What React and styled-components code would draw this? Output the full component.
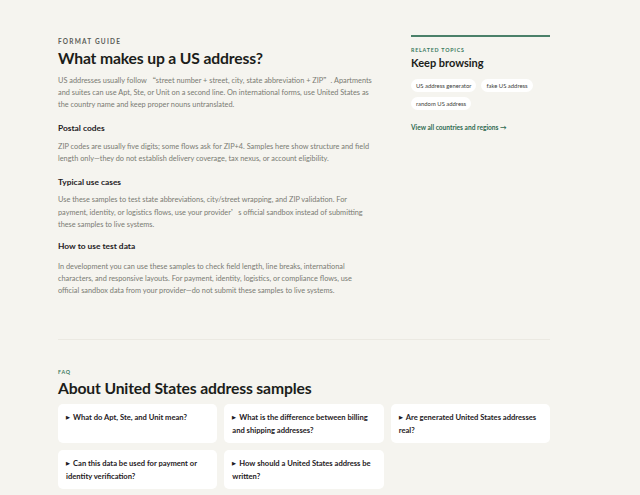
import React from 'react';
import styled, { createGlobalStyle } from 'styled-components';

const GlobalStyle = createGlobalStyle`
  html, body {
    margin: 0;
    padding: 0;
    background: #f5f4ef;
  }
  body {
    font-family: Lato, "Noto Sans", sans-serif;
    color: #1d1f1c;
  }
`;

const Page = styled.div`
  width: 492px;
  padding: 35px 0 0 58px;
`;

const Top = styled.div`
  display: grid;
  grid-template-columns: 316px 139px;
  column-gap: 37px;
  align-items: start;
`;

const Guide = styled.div`
  padding-top: 1px;
`;

const Eyebrow = styled.div`
  font-size: ${(p) => (p.small ? '5.3px' : '6.5px')};
  font-weight: 700;
  letter-spacing: ${(p) => (p.small ? '0.8px' : '1.2px')};
  text-transform: uppercase;
  color: ${(p) => (p.green ? '#3a7a5e' : '#5b5d58')};
  line-height: ${(p) => (p.small ? '8px' : '12px')};
`;

const Title = styled.h2`
  margin: ${(p) => p.$mt || '0'} 0 0;
  font-size: 15.7px;
  font-weight: 700;
  line-height: 20px;
  letter-spacing: -0.15px;
  color: #1b1d1a;
`;

const Body = styled.p`
  margin: ${(p) => p.$mt || '6px'} 0 0;
  font-size: 7.35px;
  line-height: 12px;
  color: #7a7b73;
`;

const Wide = styled.span`
  font-family: "Noto Sans CJK SC", sans-serif;
`;

const SubHead = styled.h3`
  margin: ${(p) => p.$mt || '11px'} 0 0;
  font-size: 8.4px;
  font-weight: 700;
  line-height: 12px;
  color: #1e201d;
`;

const Aside = styled.aside`
  border-top: 2px solid #4a8069;
  padding-top: 9px;
`;

const AsideTitle = styled.h3`
  margin: 2px 0 0;
  font-size: 11px;
  font-weight: 700;
  line-height: 14px;
  color: #1b1d1a;
`;

const Chips = styled.div`
  display: flex;
  flex-wrap: wrap;
  gap: 5px;
  margin-top: 9px;
`;

const Chip = styled.span`
  display: inline-flex;
  align-items: center;
  height: 13px;
  padding: 0 5px;
  background: #ffffff;
  border-radius: 7px;
  font-size: 5.9px;
  color: #3b3d39;
`;

const ViewAll = styled.a`
  display: block;
  margin-top: 12px;
  font-size: 6.6px;
  font-weight: 700;
  line-height: 10px;
  color: #2f6a51;
  text-decoration: none;
`;

const Divider = styled.hr`
  margin: 42px 0 0;
  border: 0;
  border-top: 1px solid #ebe9e2;
`;

const Faq = styled.section`
  padding-top: 28px;
`;

const FaqGrid = styled.div`
  display: grid;
  grid-template-columns: repeat(3, 1fr);
  gap: 7px;
  margin-top: 6px;
`;

const Card = styled.div`
  background: #ffffff;
  border-radius: 5px;
  height: 39px;
  box-sizing: border-box;
  padding: 7px 8px;
  font-size: 7.6px;
  font-weight: 700;
  line-height: 12px;
  color: #1e201d;
`;

const Marker = styled.span`
  font-size: 4.5px;
  margin-right: 3px;
  vertical-align: 1px;
`;

const faqs = [
  'What do Apt, Ste, and Unit mean?',
  'What is the difference between billing and shipping addresses?',
  'Are generated United States addresses real?',
  'Can this data be used for payment or identity verification?',
  'How should a United States address be written?',
];

const topics = ['US address generator', 'fake US address', 'random US address'];

export default function App() {
  return (
    <>
      <GlobalStyle />
      <Page>
        <Top>
          <Guide>
            <Eyebrow>Format guide</Eyebrow>
            <Title>What makes up a US address?</Title>
            <Body>
              US addresses usually follow <Wide>“</Wide>street number + street, city, state abbreviation + ZIP<Wide>”</Wide>. Apartments
              and suites can use Apt, Ste, or Unit on a second line. On international forms, use United States as
              the country name and keep proper nouns untranslated.
            </Body>
            <SubHead>Postal codes</SubHead>
            <Body $mt="7px">
              ZIP codes are usually five digits; some flows ask for ZIP+4. Samples here show structure and field
              length only—they do not establish delivery coverage, tax nexus, or account eligibility.
            </Body>
            <SubHead>Typical use cases</SubHead>
            <Body $mt="6px">
              Use these samples to test state abbreviations, city/street wrapping, and ZIP validation. For
              payment, identity, or logistics flows, use your provider<Wide>’</Wide>s official sandbox instead of submitting
              these samples to live systems.
            </Body>
            <SubHead $mt="9px">How to use test data</SubHead>
            <Body $mt="9px">
              In development you can use these samples to check field length, line breaks, international
              characters, and responsive layouts. For payment, identity, logistics, or compliance flows, use
              official sandbox data from your provider—do not submit these samples to live systems.
            </Body>
          </Guide>
          <Aside>
            <Eyebrow small green>Related topics</Eyebrow>
            <AsideTitle>Keep browsing</AsideTitle>
            <Chips>
              {topics.map((t) => (
                <Chip key={t}>{t}</Chip>
              ))}
            </Chips>
            <ViewAll href="#">View all countries and regions →</ViewAll>
          </Aside>
        </Top>
        <Divider />
        <Faq>
          <Eyebrow small green>FAQ</Eyebrow>
          <Title $mt="2px">About United States address samples</Title>
          <FaqGrid>
            {faqs.map((q) => (
              <Card key={q}>
                <Marker>▶</Marker>
                {q}
              </Card>
            ))}
          </FaqGrid>
        </Faq>
      </Page>
    </>
  );
}
